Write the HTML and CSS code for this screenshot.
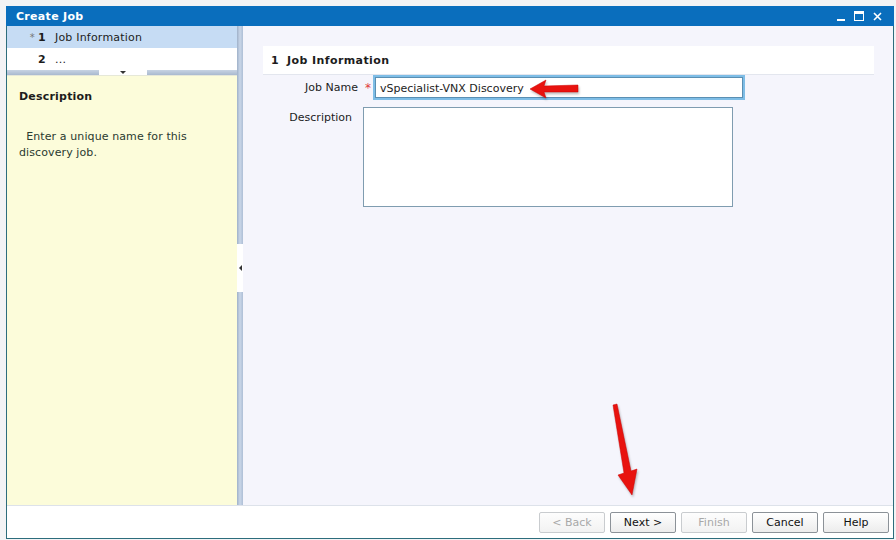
FILE: index.html
```html
<!DOCTYPE html>
<html lang="en">
<head>
  <meta charset="UTF-8" />
  <title>Create Job</title>
  <link rel="stylesheet" href="styles.css">
</head>
<body>
  <div class="dialog">
    <div class="titlebar">
      <span class="title">Create Job</span>
      <div class="win-btns">
        <span class="win-min"></span>
        <span class="win-max"></span>
        <svg class="win-close" width="9" height="9" viewBox="0 0 9 9"><path d="M1 1 L8 8 M8 1 L1 8" stroke="#fff" stroke-width="1.6"/></svg>
      </div>
    </div>

    <div class="dlg-body">
      <!-- left: steps + help text -->
      <div class="left-pane">
        <div class="step active"><span class="req">*</span><b>1</b><span>Job Information</span></div>
        <div class="step"><span class="req"></span><b>2</b><span>...</span></div>
        <div class="collapse-bar">
          <div class="collapse-handle"><span class="tri-down"></span></div>
        </div>
        <div class="help-pane">
          <h3>Description</h3>
          <p>&nbsp; Enter a unique name for this discovery job.</p>
        </div>
      </div>

      <div class="splitter">
        <div class="split-handle"><span class="tri-left"></span></div>
      </div>

      <!-- right: form -->
      <div class="right-pane">
        <div class="section-head"><b>1</b>Job Information</div>
        <div class="form">
          <label class="lbl lbl-req">Job Name</label>
          <div class="field">
            <span class="star">*</span>
            <div class="input">vSpecialist-VNX Discovery</div>
          </div>
          <label class="lbl lbl-desc">Description</label>
          <div class="field">
            <div class="textarea"></div>
          </div>
        </div>
      </div>
    </div>

    <div class="footer">
      <button class="btn" disabled>&lt; Back</button>
      <button class="btn">Next &gt;</button>
      <button class="btn" disabled>Finish</button>
      <button class="btn">Cancel</button>
      <button class="btn">Help</button>
    </div>
  </div>

  <!-- annotation arrows -->
  <svg class="arrow arrow-left" width="56" height="22" viewBox="0 0 56 22">
    <path d="M2 11 L18 2 L16 8 L50 7 L50 14 L16 14 L18 20 Z" fill="#e8130f" stroke="#c00" stroke-width="0.5"/>
  </svg>
  <svg class="arrow arrow-down" width="34" height="96" viewBox="0 0 34 96">
    <path d="M3 2 L7 1 L21 68 L27 66 L22 92 L8 72 L14 70 Z" fill="#e8130f" stroke="#c00" stroke-width="0.5"/>
  </svg>
</body>
</html>
```

FILE: styles.css
```css
* {
  box-sizing: border-box;
  margin: 0;
  padding: 0;
}

body {
  font-family: "DejaVu Sans", Verdana, sans-serif;
  font-size: 11px;
  color: #1c1c1c;
  background: #f3f3f5;
  width: 896px;
  height: 540px;
  overflow: hidden;
  position: relative;
}

.dialog {
  margin: 6px 0 0 6px;
  width: 888px;
  height: 533px;
  border: 1px solid #2d6d7c;
  border-top: none;
  background: #fff;
  display: flex;
  flex-direction: column;
}

/* Title bar */
.titlebar {
  height: 20px;
  background: #0a6ebd;
  display: flex;
  align-items: center;
  justify-content: space-between;
  padding: 0 12px 0 10px;
  margin: 0 -1px;
}

.title {
  color: #fff;
  font-weight: bold;
  font-size: 11px;
  letter-spacing: 0.3px;
}

.win-btns {
  display: flex;
  align-items: center;
  gap: 9px;
}

.win-min {
  width: 8px;
  height: 2px;
  background: #fff;
  margin-top: 8px;
}

.win-max {
  width: 10px;
  height: 10px;
  border: 1px solid #fff;
  border-top-width: 3px;
}

/* Body */
.dlg-body {
  flex: 1;
  display: flex;
  min-height: 0;
}

.left-pane {
  width: 230px;
  display: flex;
  flex-direction: column;
}

.step {
  height: 22px;
  display: flex;
  align-items: center;
  background: #fff;
  letter-spacing: 0.2px;
}

.step.active {
  background: #c6dcf4;
}

.step .req {
  width: 31px;
  text-align: right;
  color: #777;
  font-size: 10px;
  padding-right: 3px;
}

.step b {
  width: 17px;
}

.collapse-bar {
  height: 6px;
  background: linear-gradient(#c7d3e3, #a9b9cf);
  display: flex;
  justify-content: center;
  border-bottom: 1px solid #e6e8d8;
}

.collapse-handle {
  width: 48px;
  height: 5px;
  background: #fff;
  margin-left: 2px;
  display: flex;
  justify-content: center;
}

.tri-down {
  width: 0;
  height: 0;
  border-left: 3px solid transparent;
  border-right: 3px solid transparent;
  border-top: 3px solid #333;
  margin-top: 1px;
}

.help-pane {
  flex: 1;
  background: #fcfcda;
  padding: 14px 12px;
}

.help-pane h3 {
  font-size: 11px;
  font-weight: bold;
  margin-bottom: 26px;
  letter-spacing: 0.2px;
}

.help-pane p {
  line-height: 16px;
  color: #2a3a30;
  width: 195px;
  letter-spacing: 0.1px;
}

.splitter {
  width: 6px;
  background: linear-gradient(90deg, #9fb1c9, #c9d6e8 50%, #aebfd6);
  display: flex;
  align-items: center;
}

.split-handle {
  width: 6px;
  height: 48px;
  background: #fff;
  margin-top: 4px;
  display: flex;
  align-items: center;
  justify-content: center;
}

.tri-left {
  width: 0;
  height: 0;
  border-top: 3px solid transparent;
  border-bottom: 3px solid transparent;
  border-right: 3px solid #333;
}

.right-pane {
  flex: 1;
  background: #f5f5fc;
  padding: 20px 19px 0 20px;
}

.section-head {
  height: 29px;
  background: #fff;
  border-bottom: 1px solid #e3e6ee;
  font-weight: bold;
  display: flex;
  align-items: center;
  padding: 1px 0 0 8px;
  letter-spacing: 0.4px;
}

.section-head b {
  margin-right: 8px;
}

.form {
  display: grid;
  grid-template-columns: 100px 1fr;
  row-gap: 7px;
}

.lbl {
  text-align: right;
  padding-top: 6px;
}

.lbl-req {
  padding-right: 5px;
}

.lbl-desc {
  padding-top: 4px;
  padding-right: 11px;
}

.field {
  display: flex;
  align-items: flex-start;
}

.star {
  color: #e03a3a;
  width: 10px;
  font-size: 12px;
  padding-top: 6px;
  text-align: center;
}

.input {
  width: 372px;
  height: 25px;
  border: 2px solid #7ebde6;
  background: #fff;
  padding: 4px 5px 3px 5px;
  line-height: 15px;
  box-shadow: inset 0 0 0 1px #5a8fb3;
}

.textarea {
  width: 370px;
  height: 100px;
  border: 1px solid #7f9cb0;
  background: #fff;
}

/* Footer buttons */
.footer {
  height: 33px;
  border-top: 1px solid #dde2ea;
  background: #fff;
  display: flex;
  justify-content: flex-end;
  gap: 5px;
  padding: 6px 4px 0 0;
}

.btn {
  width: 66px;
  height: 21px;
  font-family: "DejaVu Sans", Verdana, sans-serif;
  font-size: 11px;
  color: #111;
  background: linear-gradient(#ffffff, #ececec);
  border: 1px solid #8c9298;
  border-radius: 2px;
}

.btn:disabled {
  color: #a8a8a8;
  border-color: #c9cccf;
  background: linear-gradient(#fdfdfd, #f2f2f2);
}

/* annotation arrows */
.arrow {
  position: absolute;
  filter: drop-shadow(1px 2px 1px rgba(0, 0, 0, 0.25));
}

.arrow-left {
  left: 528px;
  top: 78px;
}

.arrow-down {
  left: 610px;
  top: 403px;
}
```
